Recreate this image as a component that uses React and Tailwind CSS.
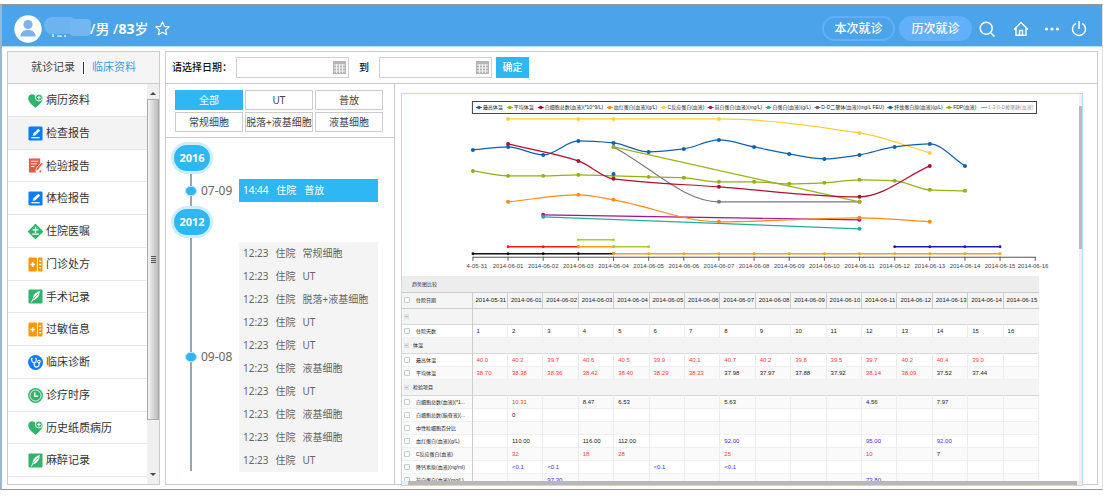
const MENU = [
  { label: '病历资料', icon: 'heart' },
  { label: '检查报告', icon: 'pen', active: true },
  { label: '检验报告', icon: 'report' },
  { label: '体检报告', icon: 'pen' },
  { label: '住院医嘱', icon: 'diamond' },
  { label: '门诊处方', icon: 'pill' },
  { label: '手术记录', icon: 'leaf' },
  { label: '过敏信息', icon: 'pill' },
  { label: '临床诊断', icon: 'stethoscope' },
  { label: '诊疗时序', icon: 'clock' },
  { label: '历史纸质病历', icon: 'heart' },
  { label: '麻醉记录', icon: 'leaf' },
];

const FILTERS = ['全部', 'UT', '普放', '常规细胞', '脱落+液基细胞', '液基细胞'];

const VISITS = ['常规细胞', 'UT', '脱落+液基细胞', 'UT', 'UT', '液基细胞', 'UT', '液基细胞', '液基细胞', 'UT'];

const DATES = [
  '2014-05-31', '2014-06-01', '2014-06-02', '2014-06-03', '2014-06-04', '2014-06-05', '2014-06-06', '2014-06-07',
  '2014-06-08', '2014-06-09', '2014-06-10', '2014-06-11', '2014-06-12', '2014-06-13', '2014-06-14', '2014-06-15',
];

// points are [day index, y]
const SERIES = [
  { color: '#ffcf3a', points: [[1, 24], [3, 24], [4, 24], [7, 24], [11, 38], [13, 58]] },
  { color: '#7d7878', points: [[4, 52], [7, 107], [11, 107]] },
  { color: '#9cb31d', points: [[4, 52], [11, 107]] },
  { color: '#95b010', points: [[0, 76], [1, 81], [2, 81], [3, 80], [4, 81], [5, 82], [6, 83], [7, 87], [8, 87], [9, 89], [10, 88], [11, 85], [12, 86], [13, 95], [14, 96]] },
  { color: '#b01030', points: [[1, 49], [3, 66], [4, 84], [7, 92], [11, 102], [13, 71]] },
  { color: '#1160ac', points: [[0, 55], [1, 52], [2, 60], [3, 46], [4, 48], [5, 57], [6, 54], [7, 45], [8, 52], [9, 59], [10, 64], [11, 60], [12, 52], [13, 49], [14, 71]] },
  { color: '#1160ac', points: [[4, 79]] },
  { color: '#a8128c', points: [[2, 120], [11, 125]] },
  { color: '#ff8a14', points: [[1, 107], [3, 100], [4, 105], [7, 127], [11, 123], [13, 127]] },
  { color: '#22ae9b', points: [[2, 122], [11, 134]] },
];

const SPANS = [
  { color: '#a6ce39', from: 3, to: 4, y: 145 },
  { color: '#ff1a1a', from: 1, to: 3, y: 152 },
  { color: '#ff9f1a', from: 3, to: 4, y: 152 },
  { color: '#a6ce39', from: 4, to: 5, y: 152 },
  { color: '#1c1ca8', from: 12, to: 15, y: 152 },
  { color: '#111111', from: 0, to: 4, y: 159 },
  { color: '#ff9f1a', from: 4, to: 15, y: 159 },
];

const LEGEND = [
  { x: 75, color: '#1160ac', label: '最高体温' },
  { x: 106, color: '#95b010', label: '平均体温' },
  { x: 137, color: '#b00020', label: '白细胞总数(血液)(*10^9/L)' },
  { x: 206, color: '#ff8a14', label: '血红蛋白(血液)(g/L)' },
  { x: 260, color: '#ffcf3a', label: 'C反应蛋白(血液)' },
  { x: 307, color: '#a8128c', label: '前白蛋白(血液)(mg/L)' },
  { x: 365, color: '#22ae9b', label: '白蛋白(血液)(g/L)' },
  { x: 414, color: '#6b6666', label: 'D-D二聚体(血液)(mg/L FEU)' },
  { x: 487, color: '#1160ac', label: '纤维蛋白原(血液)(g/L)' },
  { x: 546, color: '#95b010', label: 'FDP(血液)' },
  { x: 581, color: '#d98a94', label: '1-3-β-D葡聚糖(血液)', off: true },
];

// cell values starting with "!" are high (red), "v" are low (blue)
const ROWS = [
  { group: '' },
  { label: '住院天数', cells: ['1', '2', '3', '4', '5', '6', '7', '8', '9', '10', '11', '12', '13', '14', '15', '16'] },
  { group: '体温' },
  { label: '最高体温', cells: ['!40.0', '!40.2', '!39.7', '!40.6', '!40.5', '!39.9', '!40.1', '!40.7', '!40.2', '!39.8', '!39.5', '!39.7', '!40.2', '!40.4', '!39.0'] },
  { label: '平均体温', cells: ['!38.70', '!38.38', '!38.36', '!38.42', '!38.40', '!38.29', '!38.23', '37.98', '37.97', '37.88', '37.92', '!38.14', '!38.09', '37.52', '37.44'] },
  { group: '检验项目' },
  { label: '白细胞总数(血液)(*1...', cells: { 1: '!10.31', 3: '8.47', 4: '6.53', 7: '5.63', 11: '4.56', 13: '7.97' } },
  { label: '白细胞总数(脑脊液)(...', cells: { 1: '0' } },
  { label: '中性粒细胞百分比', cells: {} },
  { label: '血红蛋白(血液)(g/L)', cells: { 1: '110.00', 3: '116.00', 4: '112.00', 7: 'v92.00', 11: 'v95.00', 13: 'v92.00' } },
  { label: 'C反应蛋白(血液)', cells: { 1: '!32', 3: '!18', 4: '!28', 7: '!25', 11: '!10', 13: '7' } },
  { label: '降钙素原(血液)(ng/ml)', cells: { 1: 'v<0.1', 2: 'v<0.1', 5: 'v<0.1', 7: 'v<0.1' } },
  { label: '前白蛋白(血液)(mg/L)', cells: { 2: 'v97.30', 11: 'v73.80' } },
];

const dayX = (i) => 71 + i * 35.2;

// monotone cubic through the points, so a flat run stays flat
function curve(points) {
  const p = points.map(([i, y]) => [dayX(i), y]);
  const slopes = p.slice(1).map(([x, y], k) => (y - p[k][1]) / (x - p[k][0]));
  const tangents = p.map((_, k) => {
    if (k === 0) return slopes[0];
    if (k === p.length - 1) return slopes[k - 1];
    const a = slopes[k - 1];
    const b = slopes[k];
    return a * b <= 0 ? 0 : (2 * a * b) / (a + b);
  });
  let d = `M${p[0][0]} ${p[0][1]}`;
  for (let k = 1; k < p.length; k++) {
    const h = (p[k][0] - p[k - 1][0]) / 3;
    d += `C${p[k - 1][0] + h} ${p[k - 1][1] + h * tangents[k - 1]} ${p[k][0] - h} ${p[k][1] - h * tangents[k]} ${p[k][0]} ${p[k][1]}`;
  }
  return d;
}

function MenuIcon({ name }) {
  return (
    <svg viewBox="0 0 16 16" className="w-[15px] h-[15px] shrink-0" aria-hidden="true">
      {name === 'heart' && (
        <>
          <path d="M8 15.6C4.5 12.8.6 9.800.3 6 .1 3 2 1.300 4.200 1.300 6 1.300 7.300 2.300 8 3.600 8.800 2 10.200 1.300 12 1.300c2.300 0 4 2 3.700 4.700C15.300 9.800 11.500 12.800 8 15.600z" fill="#2fb46c" />
          <circle cx="11.600" cy="4.800" r="3.700" fill="#2fb46c" stroke="#fff" strokeWidth="1" />
          <path d="M11.600 2.800v4M9.600 4.800h4" stroke="#fff" strokeWidth="1.200" />
        </>
      )}
      {name === 'pen' && (
        <>
          <rect x=".5" y=".5" width="15" height="15" rx="1.500" fill="#0a7cff" />
          <path d="M5 10.500l.6-2.600L11 2.800l2 2-5.300 5.200z" fill="#fff" />
          <path d="M3.500 12.500h9" stroke="#fff" strokeWidth="1.300" />
        </>
      )}
      {name === 'report' && (
        <>
          <path d="M1 .5h12v5L8.500 11v4.500H1z" fill="#f0553f" />
          <path d="M3 3.500h8M3 6.200h6.500M3 9h4" stroke="#fff" strokeWidth="1" />
          <path d="M14.500 4.500L9 11l-.7 3 2.700-1.400L16 6z" fill="#f0553f" stroke="#fff" strokeWidth=".7" />
          <path d="M11.500 15.200h2.500v-3z" fill="#f0553f" />
        </>
      )}
      {name === 'diamond' && (
        <>
          <path d="M8-.4L16.400 8 8 16.400-.4 8z" fill="#2fb46c" />
          <path d="M8 3v6.500M5 6.200h6M4.500 10.800h7" stroke="#fff" strokeWidth="1.500" />
        </>
      )}
      {name === 'pill' && (
        <>
          <rect x=".5" y=".5" width="9" height="15" rx="1.200" fill="#ff9800" />
          <rect x="10.500" y=".5" width="5" height="15" rx="1.200" fill="#ff9800" />
          <path d="M5 5.500v5M2.500 8h5" stroke="#fff" strokeWidth="1.600" />
          <path d="M12 4.500h2M12 8h2M12 11.500h2" stroke="#fff" strokeWidth="1.500" />
        </>
      )}
      {name === 'leaf' && (
        <>
          <rect x=".5" y=".5" width="15" height="15" rx="1" fill="#2fb46c" />
          <path d="M12.500 2C7.500 3.500 4.500 7 5 12c4.500-1 7.500-4.500 7.500-10z" fill="#fff" />
          <path d="M3.800 14.200C5.500 10.500 8 7.500 10.500 5.500" stroke="#2fb46c" strokeWidth=".8" fill="none" />
          <path d="M3.600 14.300L5.300 11" stroke="#fff" strokeWidth="1" />
        </>
      )}
      {name === 'stethoscope' && (
        <>
          <circle cx="8" cy="8" r="7.900" fill="#0a7cff" />
          <path d="M4.500 3.200L3.800 4.500C4 7 5 8.300 6.500 8.300S9 7 8.800 4.200L7.800 3.200M6.500 8.300c0 3 1 4.700 2.700 4.700 2 0 2.800-1.700 2.600-4.500" stroke="#fff" strokeWidth="1.300" fill="none" />
          <circle cx="11.700" cy="7" r="1.400" fill="none" stroke="#fff" strokeWidth="1.100" />
        </>
      )}
      {name === 'clock' && (
        <>
          <circle cx="8" cy="8" r="7.900" fill="#2fb46c" />
          <circle cx="8" cy="8" r="5.900" fill="none" stroke="#fff" strokeWidth=".9" />
          <path d="M7.200 4.800v4h3.600" stroke="#fff" strokeWidth="1.700" fill="none" />
        </>
      )}
    </svg>
  );
}

function Header() {
  return (
    <header className="flex items-center h-[42px] shrink-0 pl-3 pr-[15px] pt-[6px] bg-[#4ba3ea] border-b border-[#b9dcf8] text-white">
      <svg viewBox="0 0 28 28" className="w-7 h-7" aria-hidden="true">
        <circle cx="14" cy="14" r="13.700" fill="#fff" />
        <circle cx="14" cy="9.500" r="4.600" fill="#7cb3ea" />
        <path d="M6.500 21.500c0-4 2.500-6.500 7.500-6.500s7.500 2.500 7.500 6.500z" fill="#7cb3ea" />
      </svg>
      <svg viewBox="0 0 48 24" className="w-12 h-6 ml-0.5" aria-hidden="true">
        <path d="M9 17v3M13 19h4v1M21 18v2" stroke="#fff" strokeWidth="1.200" fill="none" />
        <rect x="0" y="0" width="34" height="17" rx="8" fill="#6db4ee" />
        <rect x="26" y="2" width="21" height="17" rx="4" fill="#72b7ef" />
      </svg>
      <h1 className="-ml-0.5 text-sm font-medium whitespace-pre">/男 /<b>83</b>岁</h1>
      <button type="button" aria-label="收藏" className="ml-[7px]">
        <svg viewBox="0 0 16 16" className="w-[15px] h-[15px]" fill="none" stroke="#fff" strokeWidth="1.200" strokeLinejoin="round">
          <path d="M8 1l2.100 4.700 5 .5-3.800 3.400 1.200 5L8 12l-4.500 2.600 1.200-5L.9 6.200l5-.5z" />
        </svg>
      </button>
      <nav className="flex items-center ml-auto">
        <button type="button" className="w-[73px] h-[25px] rounded-full border-2 border-[#62affa] text-xs font-medium">本次就诊</button>
        <button type="button" className="w-[73px] h-[25px] ml-1 rounded-full bg-[#62affa] text-xs font-medium">历次就诊</button>
        <button type="button" aria-label="搜索" className="ml-[7px]">
          <svg viewBox="0 0 16 16" className="w-4 h-4" fill="none" stroke="#fff" strokeWidth="1.500">
            <circle cx="7.200" cy="7.200" r="6" />
            <path d="M11.500 11.500l4 4" />
          </svg>
        </button>
        <button type="button" aria-label="首页" className="ml-[18px]">
          <svg viewBox="0 0 16 16" className="w-4 h-4" fill="none" stroke="#fff" strokeWidth="1.400">
            <path d="M1 8.500L8 1.500l7 7M3 7v7.300h10V7M6.500 14.300V9.500h3v4.800" />
          </svg>
        </button>
        <button type="button" aria-label="更多" className="ml-[15px]">
          <svg viewBox="0 0 16 16" className="w-4 h-4" fill="#fff">
            <circle cx="2.500" cy="8" r="1.600" />
            <circle cx="8" cy="8" r="1.600" />
            <circle cx="13.500" cy="8" r="1.600" />
          </svg>
        </button>
        <button type="button" aria-label="退出" className="ml-[11px]">
          <svg viewBox="0 0 16 16" className="w-4 h-4" fill="none" stroke="#fff" strokeWidth="1.500">
            <path d="M8 0v8M4.800 2.300a6.500 6.500 0 1 0 6.400 0" />
          </svg>
        </button>
      </nav>
    </header>
  );
}

function Sidebar() {
  return (
    <aside className="flex flex-col w-[153px] shrink-0 border border-[#ccc] bg-white">
      <div className="flex items-center justify-center h-8 shrink-0 gap-2 bg-[#f5f5f5] border-b border-[#ccc] text-[11px] text-[#444]">
        <button type="button">就诊记录</button>
        <span className="w-px h-3 bg-[#335]" />
        <button type="button" className="text-[#3f9bea]">临床资料</button>
      </div>
      <div className="flex flex-1 min-h-0">
        <ul className="flex flex-col flex-1 pb-[7px]">
          {MENU.map((m) => (
            <li key={m.label} className={`flex flex-1 border-b border-[#e6e6e6] ${m.active ? 'bg-[#f3f3f3]' : ''}`}>
              <a href="#" className="flex items-center flex-1 pt-px pl-5 gap-[3px] text-[11px] text-[#333] whitespace-nowrap">
                <MenuIcon name={m.icon} />
                {m.label}
              </a>
            </li>
          ))}
        </ul>
        <div className="flex flex-col items-center w-3 py-1 bg-[#f0f0f0]" aria-hidden="true">
          <span className="my-1 border-x-[3px] border-x-transparent border-b-[3px] border-b-[#444]" />
          <div className="flex flex-col items-center justify-center gap-px w-full flex-1 border border-[#aaa] bg-linear-to-r from-[#f4f4f4] to-[#bcbcc0]">
            <span className="w-[5px] h-px bg-[#555]" />
            <span className="w-[5px] h-px bg-[#555]" />
            <span className="w-[5px] h-px bg-[#555]" />
            <span className="w-[5px] h-px bg-[#555]" />
          </div>
          <span className="mt-[53px] mb-1 border-x-[3px] border-x-transparent border-t-[3px] border-t-[#444]" />
        </div>
      </div>
    </aside>
  );
}

function DateField({ id, label }) {
  return (
    <div className="flex items-center w-[113px] h-[21px] pr-0.5 border border-[#d0d0d0]">
      <input id={id} type="text" aria-label={label} className="flex-1 min-w-0 h-full px-1 text-[10px] outline-none" />
      <svg viewBox="0 0 13 13" className="w-[13px] h-[13px]" aria-hidden="true">
        <rect x="0" y="0" width="13" height="13" fill="#b5b5b5" />
        <path d="M1 4h11M1 7h11M1 10h11M3.500 3v9M6.500 3v9M9.500 3v9" stroke="#f4f4f4" strokeWidth="1" />
      </svg>
    </div>
  );
}

function DateBar() {
  return (
    <form className="flex items-center h-8 shrink-0 pl-[6px] border-b border-[#ccc] text-[10px] font-medium text-[#111]">
      <label htmlFor="from" className="w-16">请选择日期：</label>
      <DateField id="from" label="开始日期" />
      <label htmlFor="to" className="px-[10px]">到</label>
      <DateField id="to" label="结束日期" />
      <button type="button" className="w-[33px] h-[21px] ml-1 bg-[#2fb7f3] text-white">确定</button>
    </form>
  );
}

function Year({ children }) {
  return (
    <div className="relative flex items-center justify-center w-[42px] h-8 rounded-full border-[3px] border-[#cdeefd] bg-[#2fb7f3] text-[11px] font-bold text-white">
      {children}
    </div>
  );
}

function Day({ children }) {
  return (
    <div className="relative flex items-center w-[68px] pl-[14px] gap-1 text-xs text-[#666]">
      <span className="w-3 h-[10px] rounded-full border border-[#b5e4f8] bg-[#2fb7f3]" />
      {children}
    </div>
  );
}

function Timeline() {
  return (
    <div className="relative flex-1 min-h-0 pt-1 pl-[5px] border-t border-[#ccc]">
      <span className="absolute left-6 top-4 w-[2px] h-[317px] bg-[#8fa9b5]" />
      <Year>2016</Year>
      <div className="flex items-center mt-[5px] mb-1">
        <Day>07-09</Day>
        <button type="button" className="w-[139px] h-[23px] pl-1 bg-[#2fb7f3] text-left text-[10px] text-white whitespace-pre">14:44   住院   普放</button>
      </div>
      <Year>2012</Year>
      <div className="flex items-center mt-1">
        <Day>09-08</Day>
        <ul className="w-[139px] bg-[#f4f4f4] text-[10px] text-[#666]">
          {VISITS.map((v, i) => (
            <li key={i} className="flex items-center h-[23px] pl-1 gap-[7px] whitespace-nowrap">
              <span>12:23</span>
              <span>住院</span>
              <span>{v}</span>
            </li>
          ))}
        </ul>
      </div>
    </div>
  );
}

function Chart() {
  return (
    <svg viewBox="0 0 678 181" className="block w-full mt-px" role="img" aria-label="趋势图">
      <rect x="70.500" y="6.500" width="565" height="12" fill="#fff" stroke="#444" strokeWidth="1" />
      {LEGEND.map((l) => (
        <g key={l.label}>
          <path d={`M${l.x - 1} 12.500h6`} stroke={l.color} strokeWidth="1" />
          {!l.off && <circle cx={l.x + 2} cy="12.500" r="1.800" fill={l.color} />}
          <text x={l.x + 6} y="14.500" fontSize="5" fill={l.off ? '#999' : '#222'}>{l.label}</text>
        </g>
      ))}
      {SERIES.map((s, k) => (
        <g key={k}>
          <path d={curve(s.points)} fill="none" stroke={s.color} strokeWidth="1.200" />
          {s.points.map(([i, y]) => (
            <circle key={i} cx={dayX(i)} cy={y} r="2" fill={s.color} />
          ))}
        </g>
      ))}
      {SPANS.map((s, k) => (
        <g key={k}>
          <path d={`M${dayX(s.from)} ${s.y}H${dayX(s.to)}`} stroke={s.color} strokeWidth="1.500" />
          {Array.from({ length: s.to - s.from + 1 }, (_, n) => (
            <circle key={n} cx={dayX(s.from + n)} cy={s.y} r="1.400" fill={s.color} />
          ))}
        </g>
      ))}
      <path d="M71 162.500H634.200" stroke="#555" strokeWidth="1" />
      {Array.from({ length: 17 }, (_, i) => (
        <path key={i} d={`M${dayX(i)} 162v4`} stroke="#555" strokeWidth="1" />
      ))}
      <g fontSize="6" fill="#444" textAnchor="middle">
        <text x="75" y="173">4-05-31</text>
        {DATES.slice(1).map((d, i) => (
          <text key={d} x={dayX(i + 1)} y="173">{d}</text>
        ))}
        <text x="632" y="173">2014-06-16</text>
      </g>
    </svg>
  );
}

function cellClass(value) {
  if (value.startsWith('!')) return 'text-[#ff3b3b]';
  if (value.startsWith('v')) return 'text-[#3a2cf0]';
  return 'text-[#222]';
}

function ResultTable() {
  return (
    <div className="pr-10 text-[6px] leading-[8px] text-[#222]">
      <div className="flex items-center h-4 pl-[10px] bg-[#ededed]">
        <button type="button" className="text-[5px] text-[#333]">趋势图比较</button>
      </div>
      <table className="w-full table-fixed border-collapse">
        <thead>
          <tr className="h-4 bg-[#f5f5f5] border-y border-[#ccc]">
            <th className="w-[10px] pl-0.5">
              <input type="checkbox" aria-label="全选" className="block w-[6px] h-[6px] appearance-none rounded-[1px] border border-[#ccc] bg-white" />
            </th>
            <th className="w-[60px] pl-1 text-left text-[5px] font-normal border-r border-[#ccc]">住院日期</th>
            {DATES.map((d) => (
              <th key={d} className="pl-[3px] text-left font-normal whitespace-nowrap border-r border-[#ccc] last:border-r-0">{d}</th>
            ))}
          </tr>
        </thead>
        <tbody>
          {ROWS.map((row, r) =>
            row.group !== undefined ? (
              <tr key={r} className="h-4 bg-[#f4f4f4] border-b border-[#d8d8d8]">
                <td colSpan={2} className="pl-0.5 text-[5px] border-r border-[#ccc]">
                  <span className="inline-block w-[5px] mr-1 bg-[#e2e2e2] text-center leading-[5px] text-[#666]">−</span>
                  {row.group}
                </td>
                <td colSpan={16} />
              </tr>
            ) : (
              <tr key={r} className="h-[13px] border-b border-[#f0f0f0] even:bg-white odd:bg-[#fafafa]">
                <td className="pl-0.5">
                  <input type="checkbox" aria-label={row.label} className="block w-[6px] h-[6px] appearance-none rounded-[1px] border border-[#ccc] bg-white" />
                </td>
                <td className="pl-1 text-[5px] whitespace-nowrap border-r border-[#ccc]">{row.label}</td>
                {DATES.map((d, i) => {
                  const value = row.cells[i] || '';
                  return (
                    <td key={d} className={`pl-1 border-r border-[#ececec] ${cellClass(value)}`}>
                      {value.replace(/^[!v]/, '')}
                    </td>
                  );
                })}
              </tr>
            )
          )}
        </tbody>
      </table>
    </div>
  );
}

function TrendPanel() {
  return (
    <section className="flex flex-1 min-w-0 min-h-0 flex-col mt-[9px] -mb-0.5 ml-[6px] mr-[14px] border border-[#bcdcf2] bg-white font-['Liberation_Sans','Noto_Sans_CJK_SC',sans-serif]">
      <div className="flex flex-1 min-h-0">
        <div className="flex-1 min-w-0 overflow-hidden">
          <Chart />
          <ResultTable />
        </div>
        <div className="w-[3px] pt-3 bg-[#f0f0f0]" aria-hidden="true">
          <div className="h-[38%] bg-[#bbb]" />
        </div>
      </div>
      <div className="h-1 shrink-0 pl-[6px] pr-[5px] bg-[#eee]" aria-hidden="true">
        <div className="h-full bg-[#b8b8b8]" />
      </div>
    </section>
  );
}

export default function App() {
  return (
    <div className="flex flex-col h-screen pt-1 bg-white font-['Noto_Sans','Noto_Sans_CJK_SC',sans-serif]">
      <div className="flex flex-col flex-1 min-h-0 mb-[6px] border-t border-b border-[#999] border-l-2 border-l-[#9db6cc] border-r border-r-[#ddd]">
        <Header />
        <main className="flex flex-1 min-h-0 gap-[5px] pt-1 pb-1 pl-[5px] pr-1">
          <Sidebar />
          <div className="flex flex-col flex-1 min-w-0 border border-[#ccc]">
            <DateBar />
            <div className="flex flex-1 min-h-0">
              <div className="flex flex-col w-[229px] shrink-0 border-r border-[#ccc]">
                <div className="grid grid-cols-3 gap-0.5 pt-[6px] pb-[5px] pl-[9px] pr-[11px]">
                  {FILTERS.map((f, i) => (
                    <button
                      key={f}
                      type="button"
                      className={`h-5 border text-[10px] leading-[16px] whitespace-nowrap ${i === 0 ? 'bg-[#2fb7f3] border-[#2fb7f3] text-white' : 'border-[#ccc] text-[#444]'}`}
                    >
                      {f}
                    </button>
                  ))}
                </div>
                <Timeline />
              </div>
              <TrendPanel />
            </div>
          </div>
        </main>
      </div>
    </div>
  );
}
